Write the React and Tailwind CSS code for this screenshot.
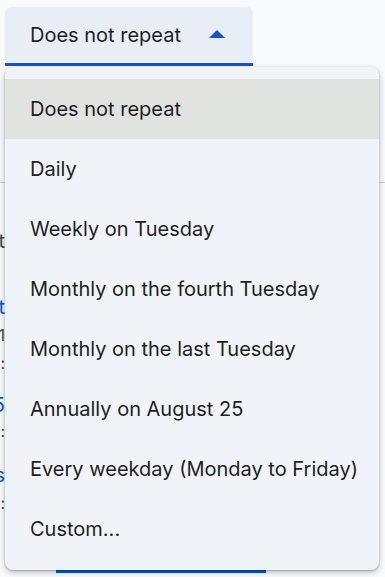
import React from 'react';

const options = [
    'Does not repeat',
    'Daily',
    'Weekly on Tuesday',
    'Monthly on the fourth Tuesday',
    'Monthly on the last Tuesday',
    'Annually on August 25',
    'Every weekday (Monday to Friday)',
    'Custom...',
];

// clipped bits of the page that peek out on the left of the menu
const peeks = [
    { text: 'Repeat', cls: 'mt-[48px] text-[20px] text-[#444746]' },
    { text: 'Meet', cls: 'mt-[46px] text-[20px] text-[#0b57d0]' },
    { text: 'meet.google.com/1', cls: 'mt-[8px] text-[16px] text-[#444746]' },
    { text: 'Join:', cls: 'mt-[8px] text-[16px] text-[#444746]' },
    { text: '+1 555', cls: 'mt-[22px] text-[20px] text-[#0b57d0]' },
    { text: 'PIN:', cls: 'mt-[8px] text-[16px] text-[#444746]' },
    { text: 'Docs', cls: 'mt-[22px] text-[20px] text-[#0b57d0]' },
    { text: 'Note:', cls: 'mt-[8px] text-[16px] text-[#444746]' },
];

export default function App() {
    return (
        <div
            className="relative w-[385px] h-[577px] overflow-hidden bg-[#f8fafd]"
            style={{ fontFamily: 'Inter, Roboto, "Noto Sans", sans-serif' }}
        >
            {/* Select button */}
            <div className="pt-[7px] pl-[5px]">
                <button className="flex items-center w-[248px] h-[59px] pl-[25px] pr-[28px] bg-[#e9eef6] rounded-t-[6px] border-b-[3px] border-[#0b57d0] text-[20px] text-[#1f1f1f] text-left">
                    <span className="flex-1">Does not repeat</span>
                    <svg width="16" height="8" viewBox="0 0 16 8" className="mb-[2px]">
                        <path d="M0 8 L8 0 L16 8 Z" fill="#0b57d0" />
                    </svg>
                </button>
            </div>

            {/* Page content underneath */}
            <div className="mt-[116px] border-t border-[#c4c7c5]" />
            <div className="flex flex-col items-end w-[5px] overflow-hidden leading-[20px] whitespace-nowrap">
                {peeks.map((p, i) => (
                    <div key={i} className={p.cls}>
                        {p.text}
                    </div>
                ))}
            </div>
            <div className="absolute left-[56px] top-[570px] w-[210px] h-[3px] bg-[#0b57d0]" />

            {/* Dropdown menu */}
            <div className="absolute left-[5px] top-[67px] w-[374px] pt-[12px] pb-[11px] bg-[#f0f4f9] rounded-[8px] shadow-[0_2px_6px_rgba(0,0,0,0.25),0_1px_2px_rgba(0,0,0,0.2)]">
                {options.map((opt, idx) => (
                    <div
                        key={idx}
                        className={`flex items-center h-[60px] pl-[25px] text-[20px] text-[#1f1f1f] ${idx === 0 ? 'bg-[#e1e3e1]' : ''}`}
                    >
                        {opt}
                    </div>
                ))}
            </div>
        </div>
    );
}
